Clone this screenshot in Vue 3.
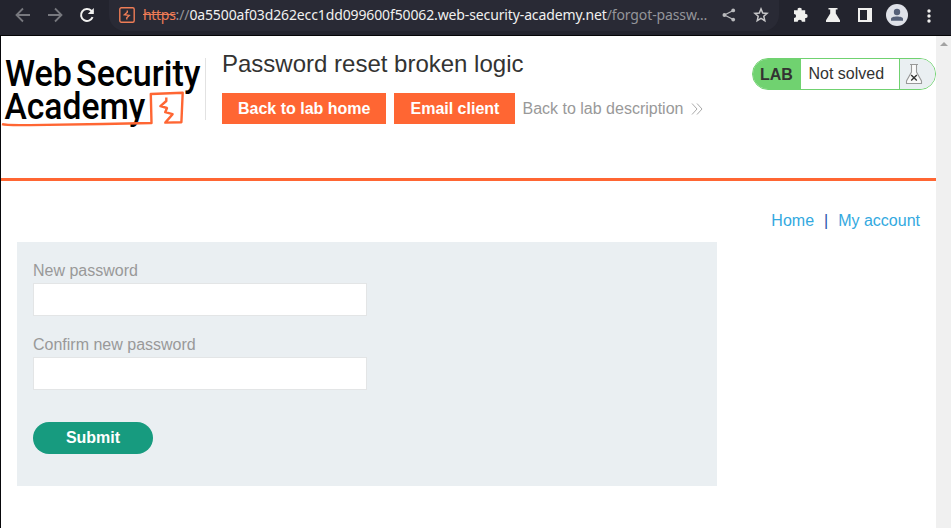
<script setup>
import { ref } from 'vue'

const fields = ref([
  { id: 'new-password-1', label: 'New password', value: '' },
  { id: 'new-password-2', label: 'Confirm new password', value: '' },
])
</script>

<template>
  <div class="browser">
    <header class="toolbar">
      <svg class="nav" viewBox="0 0 16 16"><path d="M15 8H2M8 1.5L1.5 8L8 14.5" /></svg>
      <svg class="nav" viewBox="0 0 16 16"><path d="M1 8H14M8 1.5L14.5 8L8 14.5" /></svg>
      <svg class="nav reload" viewBox="0 0 16 16">
        <path d="M13.6 10.2A6 6 0 1 1 12.3 3.7L14 5.4" />
        <path class="solid" d="M14.8 1V7H8.8Z" />
      </svg>
      <div class="omnibox">
        <svg class="site" viewBox="0 0 16 16">
          <rect x="0.8" y="0.8" width="14.4" height="14.4" rx="1.5" />
          <path d="M8.3 3.6V5.2L5.4 7.8L10.2 8.4L7.8 10.8V12.6" />
        </svg>
        <div class="url"><span class="scheme">https</span><span class="dim">://</span>0a5500af03d262ecc1dd099600f50062.web-security-academy.net<span class="dim">/forgot-passw…</span></div>
        <svg class="share" viewBox="0 0 14 14">
          <path d="M11.3 2.5L2.5 7L11.3 11.5" />
          <circle cx="11.2" cy="2.4" r="1.9" /><circle cx="2.4" cy="7" r="1.9" /><circle cx="11.2" cy="11.6" r="1.9" />
        </svg>
        <svg class="star" viewBox="0 0 16 16"><path d="M8 1.9L9.7 6L14.1 6.4L10.8 9.3L11.8 13.7L8 11.4L4.2 13.7L5.2 9.3L1.9 6.4L6.3 6Z" /></svg>
      </div>
      <div class="actions">
        <svg class="tool" viewBox="0 0 16 16"><path d="M1 3.3H4.7A2 2 0 1 1 8.6 3.3H12.2V7A2 2 0 1 1 12.2 10.9V14.8H8.9A2.1 2.1 0 0 0 4.7 14.8H1V11.1A2.1 2.1 0 0 0 1 6.9Z" /></svg>
        <svg class="tool" viewBox="0 0 16 16"><path d="M3.5 1H12.5V2.6H10.8V6.5L15 13.2V15H1V13.2L5.2 6.5V2.6H3.5Z" /></svg>
        <svg class="tool" viewBox="0 0 16 16"><path fill-rule="evenodd" d="M1 1H15V15H1ZM3 3V13H10V3Z" /></svg>
        <svg class="avatar" viewBox="0 0 22 22"><circle class="disc" cx="11" cy="11" r="11" /><circle cx="11" cy="8" r="3.2" /><path d="M5 16.8V15C5 11.8 17 11.8 17 15V16.8Z" /></svg>
        <svg class="more" viewBox="0 0 4 14"><circle cx="2" cy="2" r="1.7" /><circle cx="2" cy="7" r="1.7" /><circle cx="2" cy="12" r="1.7" /></svg>
      </div>
    </header>

    <div class="viewport">
      <main class="page">
        <section class="lab-header">
          <svg class="logo" viewBox="0 0 205 80">
            <text x="4" y="36" font-size="37.5" textLength="67" lengthAdjust="spacingAndGlyphs">Web</text>
            <text x="75" y="36" font-size="37.5" textLength="124.5" lengthAdjust="spacingAndGlyphs">Security</text>
            <text x="3.4" y="68.8" font-size="36.5" textLength="141" lengthAdjust="spacingAndGlyphs">Academy</text>
            <path d="M1 74.2C5 75.4 15 75 29 75.1L102 74L150.5 73L149.8 44L181.7 42.8L180.4 72.2L164.3 72.6L171.6 64.2L164.2 62.2L166 58L159.4 56.2L165.3 51V47.5" />
          </svg>
          <div class="title-area">
            <h2>Password reset broken logic</h2>
            <div class="buttons">
              <a class="btn">Back to lab home</a>
              <a class="btn">Email client</a>
              <a class="back">Back to lab description
                <svg viewBox="0 0 12 12"><path d="M1 .5L6 6L1 11.5M6 .5L11 6L6 11.5" /></svg>
              </a>
            </div>
          </div>
          <div class="status">
            <span class="lab">LAB</span>
            <span class="state">Not solved</span>
            <span class="flask">
              <svg viewBox="0 0 18 22"><path d="M5 1.5H13M6.5 2V9L1.5 18V20.5H16.5V18L11.5 9V2" /><path class="cross" d="M6.2 12L11.8 17.5M11.8 12L6.2 17.5" /></svg>
            </span>
          </div>
        </section>
        <nav class="links"><a>Home</a><span>|</span><a>My account</a></nav>
        <form class="card" @submit.prevent>
          <template v-for="field in fields" :key="field.id">
            <label :for="field.id">{{ field.label }}</label>
            <input :id="field.id" v-model="field.value" type="password">
          </template>
          <button type="submit">Submit</button>
        </form>
      </main>
      <div class="scrollbar"><svg viewBox="0 0 8 4"><path d="M0 4L4 0L8 4Z" /></svg></div>
    </div>
  </div>
</template>

<style>
body { overflow: hidden; }
</style>

<style scoped>
* { box-sizing: border-box; }
svg { display: block; flex: none; }
.browser { width: 951px; height: 528px; font: 16px/20px "Liberation Sans", Arial, sans-serif; background: #fff; }
.toolbar { display: flex; height: 36px; padding-left: 15px; background: #23242e; border-bottom: 1px solid #050507; }
.nav { width: 16px; height: 16px; margin: 7px 16px 0 0; fill: none; stroke: #77787e; stroke-width: 1.8; }
.reload { stroke: #f1f1f0; stroke-width: 2; margin-right: 14px; }
.reload .solid { fill: #f1f1f0; stroke: none; }
.omnibox { display: flex; width: 670px; height: 31px; padding-left: 10px; background: #292a35; border-radius: 0 0 16px 16px; }
.site { width: 16px; height: 16px; margin-top: 7px; fill: none; stroke: #ee7c56; stroke-width: 1.4; }
.url { width: 567px; margin-left: 8px; font: 14px/30px "Noto Sans", sans-serif; letter-spacing: -0.125px; color: #f0f0ef; white-space: nowrap; }
.scheme { color: #ee7c56; text-decoration: line-through; letter-spacing: -0.3px; }
.dim { color: #94959a; }
.share { width: 14px; height: 14px; margin: 8px 0 0 12px; fill: #b9babd; }
.share path { fill: none; stroke: #b9babd; stroke-width: 1.3; }
.star { width: 16px; height: 16px; margin: 7px 0 0 17px; fill: none; stroke: #c7c7c9; stroke-width: 1.5; }
.actions { display: flex; align-items: center; height: 30px; margin-left: 14px; fill: #f0f0ee; }
.tool { width: 16px; height: 16px; margin-right: 16px; }
.avatar { width: 22px; height: 22px; margin-left: -3px; fill: #556078; }
.disc { fill: #dee1e8; }
.more { width: 4px; height: 14px; margin: 1px 0 0 19px; }
.viewport { display: flex; height: 492px; border-left: 1px solid #08080b; }
.page { width: 935px; }
.lab-header { display: flex; height: 145px; padding-top: 14px; border-bottom: 3px solid #ff6633; }
.logo { width: 205px; height: 80px; font-family: Roboto, sans-serif; font-weight: 500; }
.logo path { fill: none; stroke: #ff6633; stroke-width: 2.4; stroke-linejoin: round; }
.title-area { flex: 1; position: relative; padding-left: 16px; }
.title-area::before { content: ""; position: absolute; left: -1px; top: 8px; width: 1px; height: 62px; background: #e2e2e2; }
h2 { margin: 0; font-size: 24px; line-height: 28px; font-weight: 400; color: #333332; }
.buttons { display: flex; margin-top: 15px; line-height: 31px; }
.btn { height: 31px; padding: 0 16px; margin-right: 8px; font-weight: 700; color: #fff; background: #ff6633; }
.btn + .btn { width: 121px; padding-right: 0; margin-right: 7px; }
.back { display: flex; align-items: center; gap: 8px; color: #999; white-space: nowrap; }
.back svg { width: 12px; height: 12px; fill: none; stroke: #aaa; stroke-width: 1; }
.status { display: flex; width: 184px; height: 32px; margin-top: 8px; border: 1px solid #70d270; border-radius: 16px; overflow: hidden; line-height: 31px; color: #333332; }
.lab { width: 48px; padding-left: 7px; font-weight: 700; background: #70d270; }
.state { width: 99px; padding-left: 7.5px; border-right: 1px solid #70d270; line-height: 30px; }
.flask { flex: 1; padding: 4px 0 0 5px; background: #eaeff2; }
.flask svg { width: 18px; height: 22px; fill: none; stroke: #999; stroke-width: 1.1; }
.flask path:first-child { fill: #fafafa; }
.flask .cross { stroke: #333; stroke-width: 1.4; }
.links { display: flex; justify-content: flex-end; gap: 10px; padding: 30px 16px 0 0; color: #33a9e0; }
.links span { color: #2b55a8; }
.card { width: 700px; height: 244px; margin: 11px 0 0 16px; padding: 19px 16px; background: #eaeff2; }
label { display: block; height: 22px; color: #999; }
input { display: block; width: 334px; height: 33px; margin-bottom: 19px; padding: 0 8px; border: 1px solid #e3e5e6; background: #fff; font: inherit; outline: none; }
button { display: block; width: 120px; height: 32px; margin-top: 32px; padding: 0; border: 0; border-radius: 16px; background: #179b7f; color: #fff; font: bold 16px/32px "Liberation Sans", sans-serif; }
.scrollbar { width: 15px; height: 492px; padding: 6px 0 0 4px; background: #f0f0f0; }
.scrollbar svg { width: 8px; height: 4px; fill: #a2a2a2; }
</style>
